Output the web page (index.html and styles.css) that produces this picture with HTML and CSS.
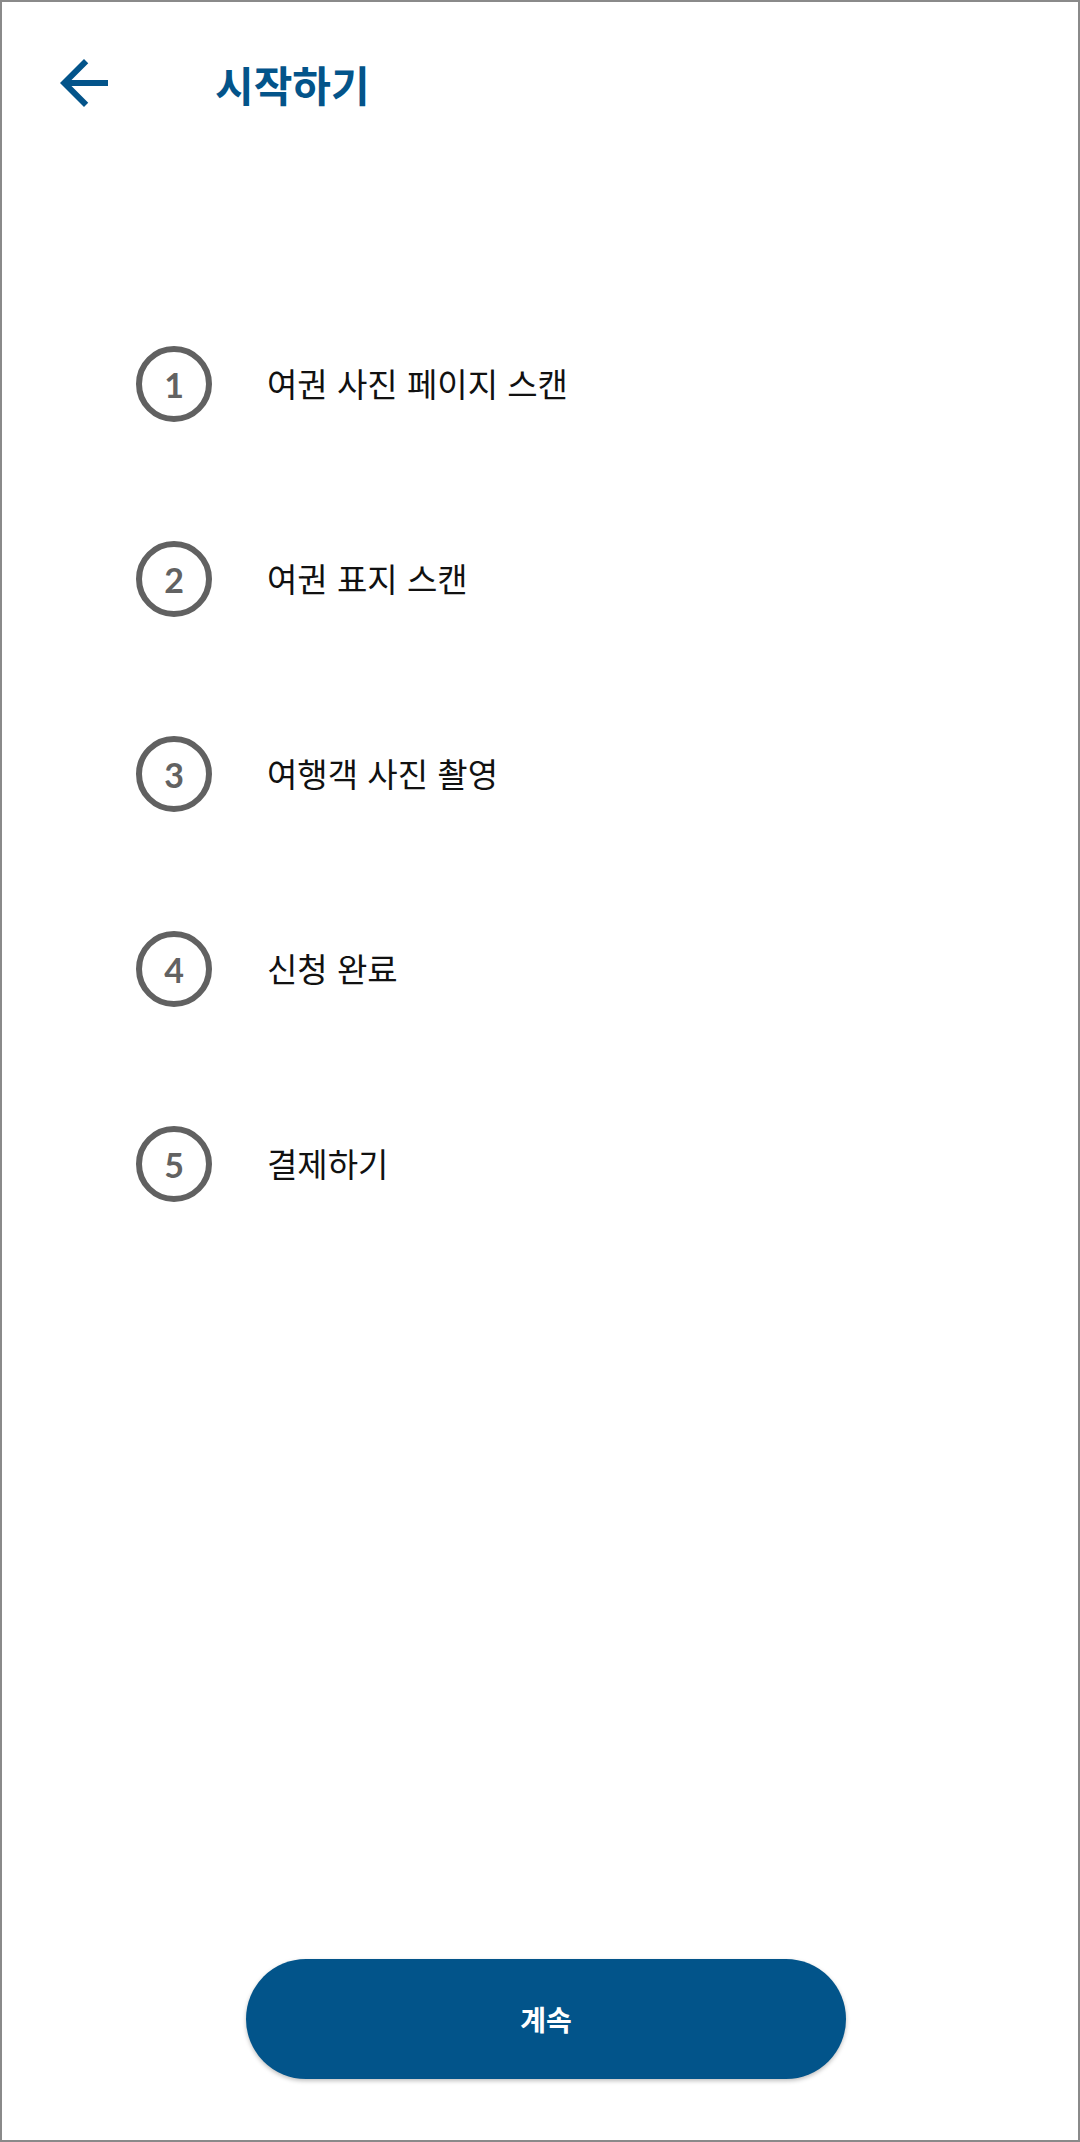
FILE: index.html
```html
<!DOCTYPE html>
<html lang="ko">
<head>
    <meta charset="UTF-8">
    <meta name="viewport" content="width=device-width, initial-scale=1.0">
    <title>시작하기</title>
    <link rel="stylesheet" href="styles.css">
</head>
<body>

<div class="screen">
    <header class="topbar">
        <button class="back" aria-label="뒤로">
            <svg viewBox="0 0 24 24" width="72" height="72">
                <path d="M20 11H7.83l5.59-5.59L12 4l-8 8 8 8 1.41-1.41L7.83 13H20v-2z" fill="#03548a"/>
            </svg>
        </button>
        <h1>시작하기</h1>
    </header>

    <ol class="steps">
        <li><span class="num">1</span><span class="label">여권 사진 페이지 스캔</span></li>
        <li><span class="num">2</span><span class="label">여권 표지 스캔</span></li>
        <li><span class="num">3</span><span class="label">여행객 사진 촬영</span></li>
        <li><span class="num">4</span><span class="label">신청 완료</span></li>
        <li><span class="num">5</span><span class="label">결제하기</span></li>
    </ol>

    <div class="footer">
        <button class="continue">계속</button>
    </div>
</div>

</body>
</html>
```

FILE: styles.css
```css
body {
    margin: 0;
    background: #fff;
    font-family: "Noto Sans CJK KR", "Noto Sans", sans-serif;
}
.screen {
    width: 1080px;
    height: 2142px;
    box-sizing: border-box;
    border: 2px solid #8a8a8a;
    display: flex;
    flex-direction: column;
}
.topbar {
    display: flex;
    align-items: center;
    padding: 45px 0 0 46px;
    gap: 95px;
}
.back {
    width: 72px;
    height: 72px;
    padding: 0;
    border: none;
    background: none;
    display: flex;
}
.topbar h1 {
    margin: 0;
    font-size: 42px;
    font-weight: 700;
    color: #03548a;
}
.steps {
    list-style: none;
    margin: 227px 0 0 134px;
    padding: 0;
    display: flex;
    flex-direction: column;
    gap: 119px;
}
.steps li {
    display: flex;
    align-items: center;
    gap: 55px;
}
.num {
    width: 76px;
    height: 76px;
    flex-shrink: 0;
    box-sizing: border-box;
    border: 6px solid #616161;
    border-radius: 50%;
    display: flex;
    align-items: center;
    justify-content: center;
    font-family: Lato, sans-serif;
    font-size: 34px;
    font-weight: 700;
    color: #626262;
}
.label {
    font-size: 33px;
    line-height: 1.2;
    color: #111;
}
.footer {
    margin-top: auto;
    padding: 0 0 61px 244px;
}
.continue {
    width: 600px;
    height: 120px;
    border: none;
    border-radius: 60px;
    background: #02548a;
    color: #fff;
    font-family: "Noto Sans CJK KR", sans-serif;
    font-size: 28px;
    font-weight: 700;
    box-shadow: 0 2px 4px rgba(0,0,0,0.25);
}
```
